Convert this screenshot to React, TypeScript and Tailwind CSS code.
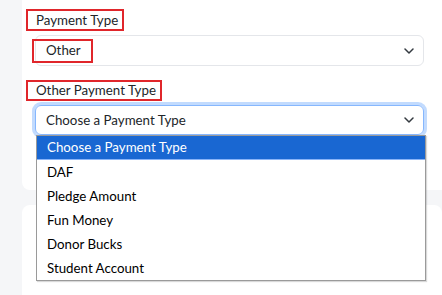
import React from "react";

const options = ["Choose a Payment Type", "DAF", "Pledge Amount", "Fun Money", "Donor Bucks", "Student Account"];

const Chevron = () => (
  <svg width="10" height="6" viewBox="0 0 10 6" className="shrink-0">
    <path d="M1 1l4 4 4-4" fill="none" stroke="#343a40" strokeWidth="1.5" strokeLinecap="round" strokeLinejoin="round" />
  </svg>
);

export default function App() {
  return (
    <div
      className="relative flex h-[295px] w-[442px] flex-col overflow-hidden bg-[#f5f6f8] text-[13.3px] text-[#212529]"
      style={{ fontFamily: 'Lato, "Noto Sans", sans-serif' }}
    >
      {/* top card */}
      <div className="ml-[22px] h-[190px] w-[440px] shrink-0 rounded-b-lg bg-white pl-[4px] pt-[9px]">
        <div className="flex h-[22px] w-[98px] items-center whitespace-nowrap border-2 border-[#e0262b] pl-[8px] pt-[1px] leading-none">
          Payment Type
        </div>

        <div className="ml-[9px] mt-[4px] flex h-[31px] w-[389px] items-center rounded-md border border-[#e4e6ea] pr-[9px]">
          <span className="-ml-[4px] flex h-[24px] w-[61px] items-center border-2 border-[#e0262b] pl-[12px] pt-[1px] leading-none">
            Other
          </span>
          <div className="flex-1" />
          <Chevron />
        </div>

        <div className="mt-[14px] flex h-[21px] w-[136px] items-center whitespace-nowrap border-2 border-[#e0262b] pl-[8px] pt-[1px] leading-none">
          Other Payment Type
        </div>

        <div className="ml-[9px] mt-[4px] flex h-[30px] w-[389px] items-center rounded-md border border-[#86b7fe] pl-[10px] pr-[9px] shadow-[0_0_0_3px_rgba(13,110,253,0.25)]">
          <span className="flex-1 pt-[1px] leading-none">Choose a Payment Type</span>
          <Chevron />
        </div>
      </div>

      {/* lower card */}
      <div className="ml-[22px] mt-[15px] flex-1 rounded-t-lg bg-white" />

      {/* open native select list */}
      <div className="absolute left-[36px] top-[135px] w-[390px] border border-[#9a9a9a] bg-white text-black shadow-[1px_1px_1px_rgba(0,0,0,0.15)]">
        {options.map((o, i) => (
          <div
            key={o}
            className={`flex h-[24px] items-center pl-[10px] pt-[1px] leading-none ${
              i === 0 ? "border-b border-[#8ab4f8] bg-[#1967d2] text-white" : ""
            }`}
          >
            {o}
          </div>
        ))}
      </div>
    </div>
  );
}
